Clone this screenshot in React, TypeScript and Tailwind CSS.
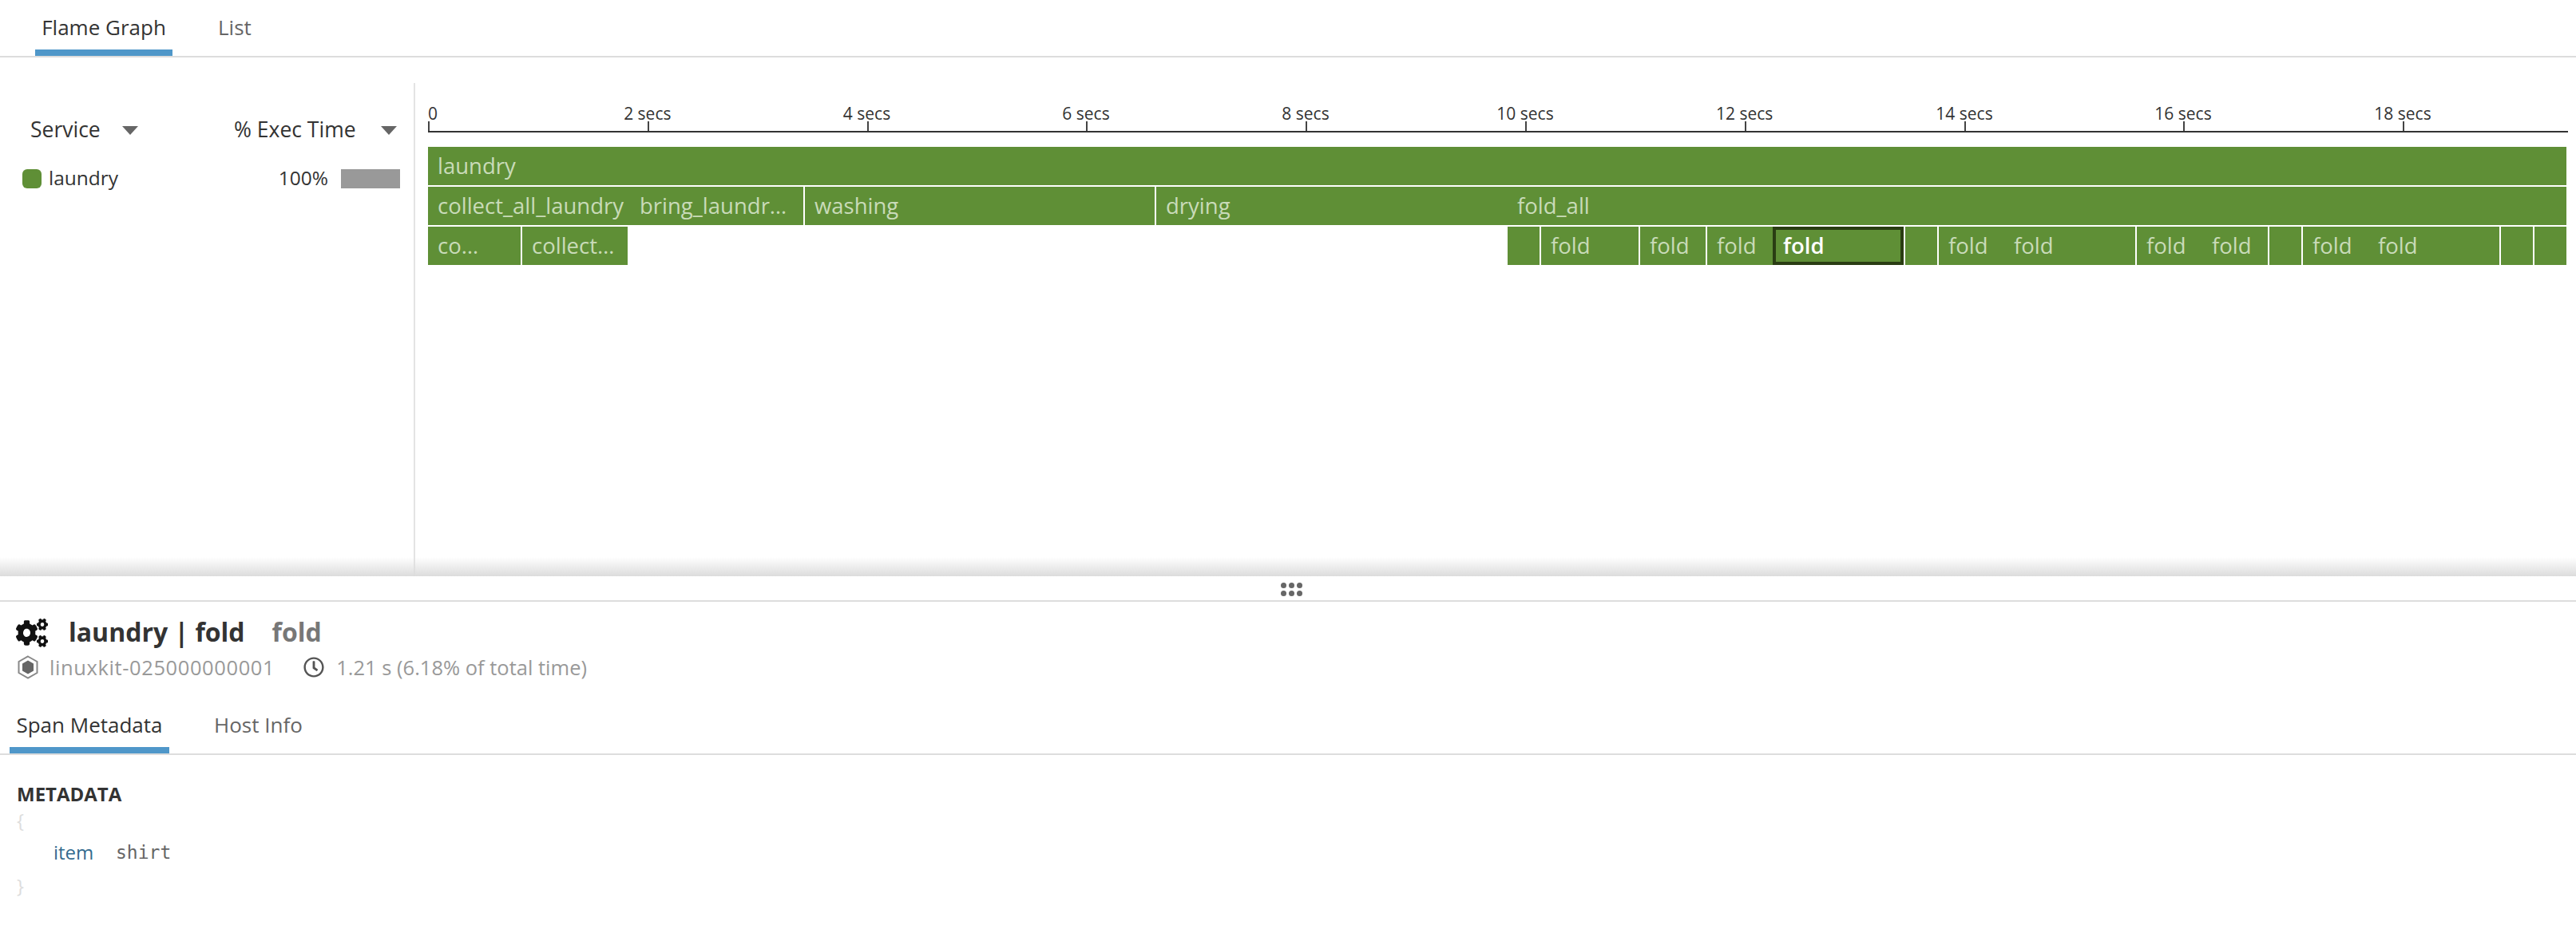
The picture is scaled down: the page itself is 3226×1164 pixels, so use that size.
import { FaCogs, FaRegClock } from 'react-icons/fa';

const ticks = [
  { x: 0, label: '0' },
  { x: 274.8, label: '2 secs' },
  { x: 549.5, label: '4 secs' },
  { x: 824, label: '6 secs' },
  { x: 1099, label: '8 secs' },
  { x: 1374, label: '10 secs' },
  { x: 1648.7, label: '12 secs' },
  { x: 1924, label: '14 secs' },
  { x: 2198, label: '16 secs' },
  { x: 2473, label: '18 secs' },
];

type Seg = { w: number; text?: string; gap?: boolean; active?: boolean };

// widths in px, gap = white separator after the segment
const row2: Seg[] = [
  { w: 253, text: 'collect_all_laundry' },
  { w: 217, text: 'bring_laundr…', gap: true },
  { w: 438, text: 'washing', gap: true },
  { w: 440, text: 'drying' },
  { w: 1326, text: 'fold_all' },
];

const row3: Seg[] = [
  { w: 116, text: 'co…', gap: true },
  { w: 132, text: 'collect…' },
  { w: 1102 },
  { w: 40, gap: true },
  { w: 122, text: 'fold', gap: true },
  { w: 82, text: 'fold', gap: true },
  { w: 82, text: 'fold' },
  { w: 164, text: 'fold', active: true, gap: true },
  { w: 40, gap: true },
  { w: 82, text: 'fold' },
  { w: 164, text: 'fold', gap: true },
  { w: 82, text: 'fold' },
  { w: 82, text: 'fold', gap: true },
  { w: 40, gap: true },
  { w: 82, text: 'fold' },
  { w: 164, text: 'fold', gap: true },
  { w: 40, gap: true },
  { w: 40 },
];

const Triangle = () => <span className='block w-0 h-0 border-x-[10px] border-x-transparent border-t-[11px] border-t-[#666]' />;

const Segment = ({ seg, empty }: { seg: Seg; empty?: boolean }) => (
  <div
    style={{ width: seg.w, marginRight: seg.gap ? 2 : 0 }}
    className={`h-full shrink-0 flex items-center whitespace-nowrap overflow-hidden ${empty ? '' : 'bg-[#5f8f36]'} ${seg.active ? 'border-4 border-[#2a3d13] pl-[9px] text-white font-semibold' : 'pl-[12px] text-[#c9dbb9]'}`}
  >
    {seg.text}
  </div>
);

const App = () => {
  return (
    <div className="w-[3226px] h-[1164px] bg-white overflow-hidden flex flex-col font-['Open_Sans',sans-serif] text-[26px] text-[#333]">
      <div className='h-[72px] shrink-0 flex pl-[44px] border-b-2 border-[#ddd]'>
        <div className='w-[172px] h-[70px] border-b-8 border-[#4f97c9] text-center leading-[68px]'>Flame Graph</div>
        <div className='ml-[57px] leading-[68px] text-[#666]'>List</div>
      </div>

      <div className='relative h-[650px] shrink-0 flex pt-[32px]'>
        <div className='w-[520px] shrink-0 border-r-2 border-[#e4e4e4] pt-[44px] pr-[17px]'>
          <div className='flex items-center h-[30px] text-[26.5px]'>
            <div className='w-[293px] pl-[38px] flex items-center'>
              <span className='w-[115px]'>Service</span>
              <Triangle />
            </div>
            <span className='w-[184px]'>% Exec Time</span>
            <Triangle />
          </div>
          <div className='flex items-center h-[24px] mt-[34px] pl-[28px] text-[24.5px]'>
            <span className='w-[24px] h-[24px] rounded-[6px] bg-[#5f8f36]' />
            <span className='ml-[9px] -mt-[2px]'>laundry</span>
            <span className='ml-auto -mt-[2px]'>100%</span>
            <span className='w-[74px] h-[24px] ml-[16px] bg-[#999]' />
          </div>
        </div>

        <div className='pl-[16px] flex-1'>
          <div className='relative w-[2680px] h-[46px] border-b-2 border-[#333] mt-[14px] box-content -mb-[2px]'>
            {ticks.map((t) => (
              <div key={t.label} style={{ left: t.x }} className='absolute top-0 h-full'>
                <span className={`absolute top-[14px] text-[21px] leading-[20px] whitespace-nowrap ${t.x === 0 ? 'left-0' : '-translate-x-1/2'}`}>{t.label}</span>
                <span className='absolute bottom-0 left-0 w-[2px] h-[12px] bg-[#444]' />
              </div>
            ))}
          </div>
          <div className='w-[2678px] mt-[20px] flex flex-col gap-[2px] text-[27.5px]'>
            <div className='h-[48px] bg-[#5f8f36] pl-[12px] flex items-center text-[#c9dbb9]'>laundry</div>
            <div className='h-[48px] flex'>
              {row2.map((s, i) => <Segment key={i} seg={s} />)}
            </div>
            <div className='h-[48px] flex'>
              {row3.map((s, i) => <Segment key={i} seg={s} empty={i === 2} />)}
            </div>
          </div>
        </div>

        <div className='absolute left-0 right-0 bottom-0 h-[24px] bg-gradient-to-b from-white/0 to-[#dcdcdc]' />
      </div>

      <div className='h-[32px] shrink-0 border-b-2 border-[#ddd] flex items-center justify-center'>
        <div className='grid grid-cols-3 gap-x-[3px] gap-y-[3px] mt-[2px] ml-[8px]'>
          {[0, 1, 2, 3, 4, 5].map((d) => <span key={d} className='w-[7px] h-[7px] rounded-full bg-[#666]' />)}
        </div>
      </div>

      <div className='h-[66px] shrink-0 flex items-end pl-[20px] pb-[8px]'>
        <svg className='w-[40px] h-[36px] text-[#111] mb-[1px]' viewBox='0 0 640 512' preserveAspectRatio='none' fill='currentColor'>
          <path d='M512.1 191l-8.2 14.3c-3 5.3-9.4 7.5-15.1 5.4-11.8-4.4-22.6-10.7-32.1-18.6-4.6-3.8-5.8-10.5-2.8-15.7l8.2-14.3c-6.9-8-12.3-17.3-15.9-27.4h-16.5c-6 0-11.2-4.3-12.2-10.3-2-12-2.1-24.6 0-37.1 1-6 6.2-10.4 12.2-10.4h16.5c3.6-10.1 9-19.4 15.9-27.4l-8.2-14.3c-3-5.2-1.9-11.9 2.8-15.7 9.5-7.9 20.4-14.2 32.1-18.6 5.7-2.1 12.1.1 15.1 5.4l8.2 14.3c10.5-1.9 21.2-1.9 31.7 0L552 6.3c3-5.3 9.4-7.5 15.1-5.4 11.8 4.4 22.6 10.7 32.1 18.6 4.6 3.8 5.8 10.5 2.8 15.7l-8.2 14.3c6.9 8 12.3 17.3 15.9 27.4h16.5c6 0 11.2 4.3 12.2 10.3 2 12 2.1 24.6 0 37.1-1 6-6.2 10.4-12.2 10.4h-16.5c-3.6 10.1-9 19.4-15.9 27.4l8.2 14.3c3 5.2 1.9 11.9-2.8 15.7-9.5 7.9-20.4 14.2-32.1 18.6-5.7 2.1-12.1-.1-15.1-5.4l-8.2-14.3c-10.4 1.9-21.2 1.9-31.7 0zm-10.5-58.8c38.5 29.6 82.4-14.3 52.8-52.8-38.5-29.7-82.4 14.3-52.8 52.8zM386.3 286.1l33.7 16.8c10.1 5.8 14.5 18.1 10.5 29.1-8.9 24.2-26.4 46.4-42.6 65.8-7.4 8.9-20.2 11.1-30.3 5.3l-29.1-16.8c-16 13.7-34.6 24.6-54.9 31.7v33.6c0 11.6-8.3 21.6-19.7 23.6-24.6 4.2-50.4 4.4-75.9 0-11.5-2-20-11.9-20-23.6V418c-20.3-7.2-38.9-18-54.9-31.7L74 403c-10 5.8-22.9 3.6-30.3-5.3-16.2-19.4-33.3-41.6-42.2-65.7-4-10.9.4-23.2 10.5-29.1l33.3-16.8c-3.9-20.9-3.9-42.4 0-63.4L12 205.8c-10.1-5.8-14.6-18.1-10.5-29 8.9-24.2 26-46.4 42.2-65.8 7.4-8.9 20.2-11.1 30.3-5.3l29.1 16.8c16-13.7 34.6-24.6 54.9-31.7V57.1c0-11.5 8.2-21.5 19.6-23.5 24.6-4.2 50.5-4.4 76-.1 11.5 2 20 11.9 20 23.6v33.6c20.3 7.2 38.9 18 54.9 31.7l29.1-16.8c10-5.8 22.9-3.6 30.3 5.3 16.2 19.4 33.2 41.6 42.1 65.8 4 10.9.1 23.2-10 29.1l-33.7 16.8c3.9 21 3.9 42.5 0 63.5zm-117.6 21.1c59.2-77-28.7-164.9-105.7-105.7-59.2 77 28.7 164.9 105.7 105.7zm243.4 182.7l-8.2 14.3c-3 5.3-9.4 7.5-15.1 5.4-11.8-4.4-22.6-10.7-32.1-18.6-4.6-3.8-5.8-10.5-2.8-15.7l8.2-14.3c-6.9-8-12.3-17.3-15.9-27.4h-16.5c-6 0-11.2-4.3-12.2-10.3-2-12-2.1-24.6 0-37.1 1-6 6.2-10.4 12.2-10.4h16.5c3.6-10.1 9-19.4 15.9-27.4l-8.2-14.3c-3-5.2-1.9-11.9 2.8-15.7 9.5-7.9 20.4-14.2 32.1-18.6 5.7-2.1 12.1.1 15.1 5.4l8.2 14.3c10.5-1.9 21.2-1.9 31.7 0l8.2-14.3c3-5.3 9.4-7.5 15.1-5.4 11.8 4.4 22.6 10.7 32.1 18.6 4.6 3.8 5.8 10.5 2.8 15.7l-8.2 14.3c6.9 8 12.3 17.3 15.9 27.4h16.5c6 0 11.2 4.3 12.2 10.3 2 12 2.1 24.6 0 37.1-1 6-6.2 10.4-12.2 10.4h-16.5c-3.6 10.1-9 19.4-15.9 27.4l8.2 14.3c3 5.2 1.9 11.9-2.8 15.7-9.5 7.9-20.4 14.2-32.1 18.6-5.7 2.1-12.1-.1-15.1-5.4l-8.2-14.3c-10.4 1.9-21.2 1.9-31.7 0zM501.6 431c38.5 29.6 82.4-14.3 52.8-52.8-38.5-29.6-82.4 14.3-52.8 52.8z' />
        </svg>
        <span className='ml-[26px] text-[32px] leading-[40px] font-bold'>laundry | fold</span>
        <span className='ml-[34px] text-[32px] leading-[40px] font-bold text-[#777]'>fold</span>
      </div>

      <div className='h-[32px] shrink-0 flex items-center pl-[22px] text-[25.5px] text-[#999]'>
        <svg width='26' height='30' viewBox='0 0 26 30'>
          <path d='M13 1.5 24.5 8v14L13 28.5 1.5 22V8z' fill='none' stroke='#888' strokeWidth='2' />
          <path d='M13 6.5 20 10.5v9L13 23.5 6 19.5v-9z' fill='#666' />
        </svg>
        <span className='ml-[14px] tracking-[0.6px]'>linuxkit-025000000001</span>
        <FaRegClock className='ml-[36px] w-[26px] h-[26px] text-[#555]' />
        <span className='ml-[15px]'>1.21 s (6.18% of total time)</span>
      </div>

      <div className='h-[94px] shrink-0 flex items-end pl-[12px] border-b-2 border-[#ddd]'>
        <div className='w-[200px] h-[64px] border-b-8 border-[#4f97c9] text-center leading-[56px]'>Span Metadata</div>
        <div className='ml-[56px] h-[64px] leading-[56px] text-[#666]'>Host Info</div>
      </div>

      <div className='pl-[21px] pt-[37px]'>
        <div className='text-[24px] leading-[24px] font-bold'>METADATA</div>
        <div className='text-[#ddd] text-[24px] leading-[30px] mt-[6px]'>{'{'}</div>
        <div className='flex items-center h-[30px] mt-[10px] pl-[46px] text-[23px]'>
          <span className='text-[#336b8f] text-[24px] w-[78px]'>item</span>
          <span className="font-['DejaVu_Sans_Mono',monospace] text-[#666]">shirt</span>
        </div>
        <div className='text-[#ddd] text-[24px] leading-[30px] mt-[12px]'>{'}'}</div>
      </div>
    </div>
  );
};

export default App;
